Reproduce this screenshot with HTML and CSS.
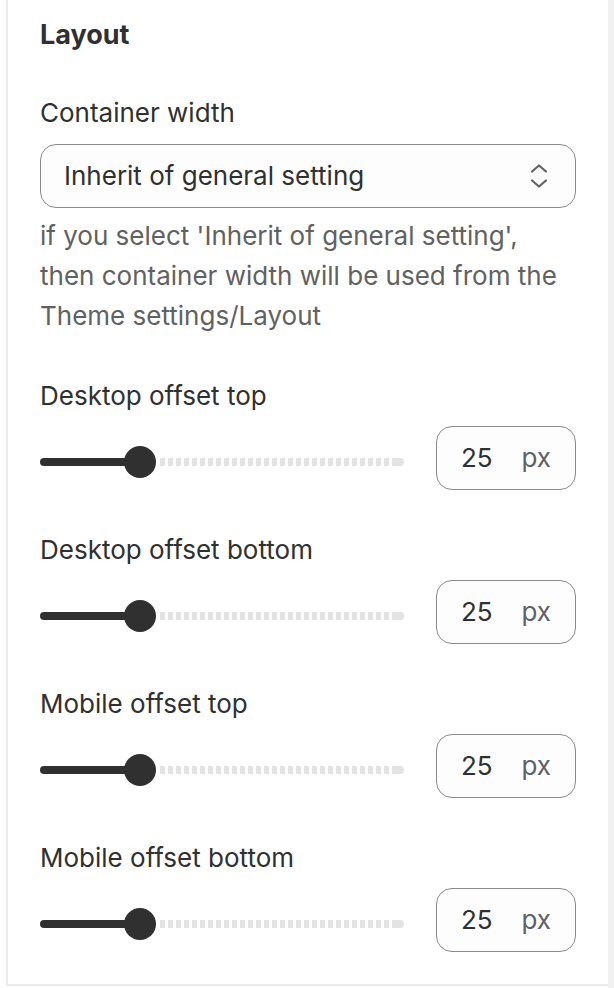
FILE: index.html
```html
<!DOCTYPE html>
<html lang="en">
<head>
    <meta charset="UTF-8">
    <meta name="viewport" content="width=device-width, initial-scale=1.0">
    <title>Layout settings</title>
    <link rel="stylesheet" href="styles.css">
</head>
<body>
    <div class="page">
        <div class="panel">
            <h2 class="panel-title">Layout</h2>

            <div class="field">
                <div class="field-label">Container width</div>
                <div class="select">
                    <span class="select-value">Inherit of general setting</span>
                    <svg class="select-icon" width="20" height="28" viewBox="0 0 20 28" fill="none" stroke="#616161" stroke-width="2.2" stroke-linecap="round" stroke-linejoin="round">
                        <path d="M3 9.5 L10 3.5 L17 9.5"/>
                        <path d="M3 18.5 L10 24.5 L17 18.5"/>
                    </svg>
                </div>
                <p class="help-text">if you select 'Inherit of general setting', then container width will be used from the Theme settings/Layout</p>
            </div>

            <div class="field">
                <div class="field-label">Desktop offset top</div>
                <div class="range-row">
                    <div class="slider">
                        <div class="slider-fill"></div>
                        <div class="slider-rest"></div>
                        <div class="slider-thumb"></div>
                    </div>
                    <div class="number-input"><span class="number-value">25</span><span class="number-suffix">px</span></div>
                </div>
            </div>

            <div class="field">
                <div class="field-label">Desktop offset bottom</div>
                <div class="range-row">
                    <div class="slider">
                        <div class="slider-fill"></div>
                        <div class="slider-rest"></div>
                        <div class="slider-thumb"></div>
                    </div>
                    <div class="number-input"><span class="number-value">25</span><span class="number-suffix">px</span></div>
                </div>
            </div>

            <div class="field">
                <div class="field-label">Mobile offset top</div>
                <div class="range-row">
                    <div class="slider">
                        <div class="slider-fill"></div>
                        <div class="slider-rest"></div>
                        <div class="slider-thumb"></div>
                    </div>
                    <div class="number-input"><span class="number-value">25</span><span class="number-suffix">px</span></div>
                </div>
            </div>

            <div class="field field-last">
                <div class="field-label">Mobile offset bottom</div>
                <div class="range-row">
                    <div class="slider">
                        <div class="slider-fill"></div>
                        <div class="slider-rest"></div>
                        <div class="slider-thumb"></div>
                    </div>
                    <div class="number-input"><span class="number-value">25</span><span class="number-suffix">px</span></div>
                </div>
            </div>
        </div>
        <div class="gutter"></div>
    </div>
</body>
</html>
```

FILE: styles.css
```css
* {
    box-sizing: border-box;
}
body {
    margin: 0;
    background-color: #ffffff;
    font-family: Inter, "Noto Sans", sans-serif;
    color: #303030;
    font-size: 26px;
    line-height: 40px;
}
.page {
    display: flex;
    min-height: 988px;
}
.panel {
    flex: 0 0 602px;
    margin-left: 6px;
    align-self: flex-start;
    border-left: 2px solid #ebebeb;
    border-bottom: 2px solid #ebebeb;
    padding: 15px 32px 32px 32px;
}
.gutter {
    flex: 1;
    background-color: #f1f1f1;
}
.panel-title {
    margin: 0 0 38px 0;
    font-size: 27px;
    font-weight: 650;
    line-height: 40px;
}
.field {
    margin-bottom: 40px;
}
.field-last {
    margin-bottom: 0;
}
.field-label {
    margin-bottom: 10px;
}
.select {
    display: flex;
    align-items: center;
    justify-content: space-between;
    height: 64px;
    margin-top: 11px;
    padding: 0 26px 0 23px;
    border: 1px solid #8a8a8a;
    border-radius: 16px;
    background-color: #fdfdfd;
}
.select-icon {
    display: block;
}
.help-text {
    margin: 8px 0 0 0;
    color: #616161;
}
.range-row {
    display: flex;
    align-items: center;
    gap: 32px;
}
.slider {
    position: relative;
    flex: 1;
    display: flex;
    align-items: center;
    height: 32px;
    margin-top: 8px;
}
.slider-fill {
    width: 100px;
    height: 8px;
    border-radius: 4px 0 0 4px;
    background-color: #303030;
}
.slider-rest {
    flex: 1;
    height: 8px;
    margin-left: 20px;
    border-radius: 0 4px 4px 0;
    background:
        linear-gradient(#e3e3e3, #e3e3e3) right / 12px 100% no-repeat,
        repeating-linear-gradient(90deg, #e3e3e3 0 5px, transparent 5px 8px);
}
.slider-thumb {
    position: absolute;
    left: 84px;
    top: 0;
    width: 32px;
    height: 32px;
    border-radius: 50%;
    background-color: #303030;
}
.number-input {
    display: flex;
    align-items: center;
    justify-content: space-between;
    flex: 0 0 140px;
    height: 64px;
    padding: 0 24px;
    border: 1px solid #8a8a8a;
    border-radius: 16px;
    background-color: #fdfdfd;
}
.number-suffix {
    color: #616161;
}
```
